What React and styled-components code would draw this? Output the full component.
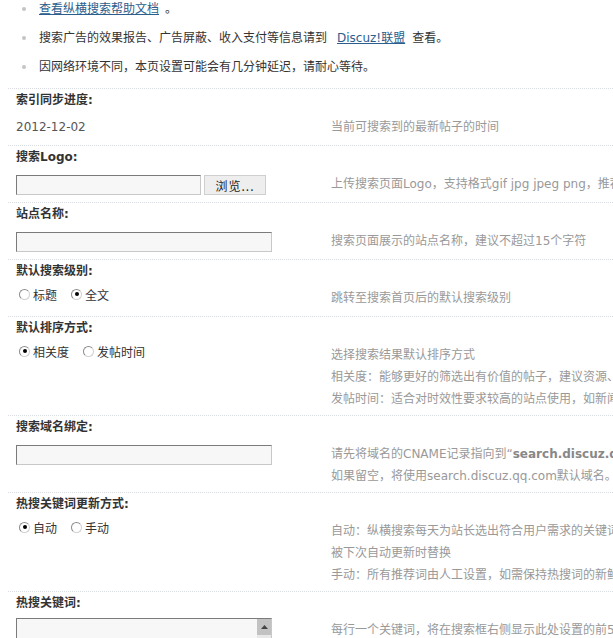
import React from 'react'
import styled, { createGlobalStyle } from 'styled-components'

const GlobalStyle = createGlobalStyle`
  body {
    margin: 0;
    background: #fff;
    color: #333;
    font: 12px "DejaVu Sans", "Noto Sans CJK SC", sans-serif;
    overflow: hidden;
  }
`

const Page = styled.div`
  padding-left: 8px;
`

const NoticeList = styled.ul`
  list-style: none;
  margin: 0;
  padding: 0 0 1px;
`

const NoticeItem = styled.li`
  display: flex;
  align-items: center;
  height: 18px;
  line-height: 18px;
  margin-bottom: 11px;
  white-space: nowrap;
  color: #333;
`

const Dot = styled.span`
  width: 4px;
  height: 4px;
  border-radius: 50%;
  background: #c4c4c4;
  margin: 0 13px 0 14px;
  flex: none;
`

const Link = styled.a`
  color: #2b5e8c;
  text-decoration: underline;
  margin: ${props => props.$spaced ? '0 7px 0 10px' : '0 6px 0 0'};
`

const Block = styled.section`
  border-top: 1px dotted #d9dde2;
  padding-left: 8px;
`

const Label = styled.h3`
  margin: 0;
  height: 23px;
  line-height: 23px;
  font-size: 12px;
  font-weight: bold;
  color: #333;
  white-space: nowrap;
`

const Row = styled.div`
  display: grid;
  grid-template-columns: 315px minmax(0, 1fr);
  min-height: 33px;
`

const Field = styled.div`
  padding-bottom: 7px;
`

const Value = styled.div`
  padding-top: 4px;
  line-height: 22px;
  color: #555;
`

const Tips = styled.div`
  padding: 4px 0 5px;
  overflow: hidden;
  color: #999;
`

const TipLine = styled.div`
  line-height: 22px;
  white-space: nowrap;

  b {
    color: #888;
  }
`

const TextInput = styled.input`
  box-sizing: border-box;
  display: block;
  margin: 6px 0 0;
  width: ${props => props.$width || 256}px;
  height: 20px;
  padding: 0 3px;
  border: 1px solid;
  border-color: #7b7b7b #c8c8c8 #c8c8c8 #7b7b7b;
  background: #f7f7f7;
  font: inherit;
  outline: none;
`

const FileRow = styled.div`
  display: flex;
  gap: 3px;
  margin-top: 6px;

  ${TextInput} {
    margin: 0;
  }
`

const BrowseButton = styled.button`
  box-sizing: border-box;
  width: 62px;
  height: 20px;
  padding: 0;
  border: 1px solid;
  border-color: #fff #b8b8b8 #b8b8b8 #fff;
  outline: 1px solid #cfcfcf;
  outline-offset: -1px;
  background: #eeeeee;
  color: #222;
  font: 12px "Noto Sans CJK SC", sans-serif;
  letter-spacing: 1px;
`

const RadioGroup = styled.div`
  display: flex;
  align-items: center;
  height: 20px;
  margin-top: 1px;
  padding-left: 3px;
`

const RadioItem = styled.label`
  display: flex;
  align-items: center;
  margin-right: 14px;
  color: #333;
  white-space: nowrap;
`

const RadioMark = styled.span`
  box-sizing: border-box;
  width: 11px;
  height: 11px;
  margin-right: 3px;
  border-radius: 50%;
  border: 1px solid;
  border-color: #8c8c8c #d0d0d0 #d0d0d0 #8c8c8c;
  background: #fff;
  display: flex;
  align-items: center;
  justify-content: center;

  &::after {
    content: '';
    width: 4px;
    height: 4px;
    border-radius: 50%;
    background: ${props => props.$checked ? '#000' : 'transparent'};
  }
`

const AreaBox = styled.div`
  box-sizing: border-box;
  display: flex;
  margin-top: 3px;
  width: 256px;
  height: 80px;
  border: 1px solid;
  border-color: #7b7b7b #c8c8c8 #c8c8c8 #7b7b7b;
  background: #f7f7f7;
`

const Area = styled.textarea`
  flex: 1;
  border: 0;
  background: transparent;
  resize: none;
  outline: none;
  font: inherit;
`

const ScrollTrack = styled.div`
  width: 14px;
  background: #e8e8e8;
`

const ScrollArrow = styled.div`
  height: 16px;
  background: #c2c2c2;
  display: flex;
  align-items: center;
  justify-content: center;
`

function Radio ({ checked, children }) {
  return (
    <RadioItem>
      <RadioMark $checked={checked} />
      {children}
    </RadioItem>
  )
}

function Setting ({ label, field, tips }) {
  return (
    <Block>
      <Label>{label}</Label>
      <Row>
        <Field>{field}</Field>
        <Tips>
          {tips.map((t, i) => <TipLine key={i}>{t}</TipLine>)}
        </Tips>
      </Row>
    </Block>
  )
}

export default function App () {
  return (
    <Page>
      <GlobalStyle />
      <NoticeList>
        <NoticeItem>
          <Dot />
          <Link href="#">查看纵横搜索帮助文档</Link>。
        </NoticeItem>
        <NoticeItem>
          <Dot />
          搜索广告的效果报告、广告屏蔽、收入支付等信息请到
          <Link href="#" $spaced>Discuz!联盟</Link>查看。
        </NoticeItem>
        <NoticeItem>
          <Dot />
          因网络环境不同，本页设置可能会有几分钟延迟，请耐心等待。
        </NoticeItem>
      </NoticeList>

      <Setting
        label="索引同步进度:"
        field={<Value>2012-12-02</Value>}
        tips={['当前可搜索到的最新帖子的时间']}
      />

      <Setting
        label="搜索Logo:"
        field={
          <FileRow>
            <TextInput $width={185} />
            <BrowseButton>浏览...</BrowseButton>
          </FileRow>
        }
        tips={['上传搜索页面Logo，支持格式gif jpg jpeg png，推荐尺寸为宽度不超过200像素']}
      />

      <Setting
        label="站点名称:"
        field={<TextInput />}
        tips={['搜索页面展示的站点名称，建议不超过15个字符']}
      />

      <Setting
        label="默认搜索级别:"
        field={
          <RadioGroup>
            <Radio>标题</Radio>
            <Radio checked>全文</Radio>
          </RadioGroup>
        }
        tips={['跳转至搜索首页后的默认搜索级别']}
      />

      <Setting
        label="默认排序方式:"
        field={
          <RadioGroup>
            <Radio checked>相关度</Radio>
            <Radio>发帖时间</Radio>
          </RadioGroup>
        }
        tips={[
          '选择搜索结果默认排序方式',
          '相关度：能够更好的筛选出有价值的帖子，建议资源、知识类站点使用',
          '发帖时间：适合对时效性要求较高的站点使用，如新闻、资讯类站点'
        ]}
      />

      <Setting
        label="搜索域名绑定:"
        field={<TextInput />}
        tips={[
          <>请先将域名的CNAME记录指向到“<b>search.discuz.qq.com</b>”</>,
          '如果留空，将使用search.discuz.qq.com默认域名。'
        ]}
      />

      <Setting
        label="热搜关键词更新方式:"
        field={
          <RadioGroup>
            <Radio checked>自动</Radio>
            <Radio>手动</Radio>
          </RadioGroup>
        }
        tips={[
          '自动：纵横搜索每天为站长选出符合用户需求的关键词，您手动添加的关键词会',
          '被下次自动更新时替换',
          '手动：所有推荐词由人工设置，如需保持热搜词的新鲜度请经常更新'
        ]}
      />

      <Setting
        label="热搜关键词:"
        field={
          <AreaBox>
            <Area />
            <ScrollTrack>
              <ScrollArrow>
                <svg width="7" height="4" viewBox="0 0 7 4">
                  <path d="M0 4 L3.5 0 L7 4 Z" fill="#444" />
                </svg>
              </ScrollArrow>
            </ScrollTrack>
          </AreaBox>
        }
        tips={['每行一个关键词，将在搜索框右侧显示此处设置的前5个关键词']}
      />
    </Page>
  )
}
